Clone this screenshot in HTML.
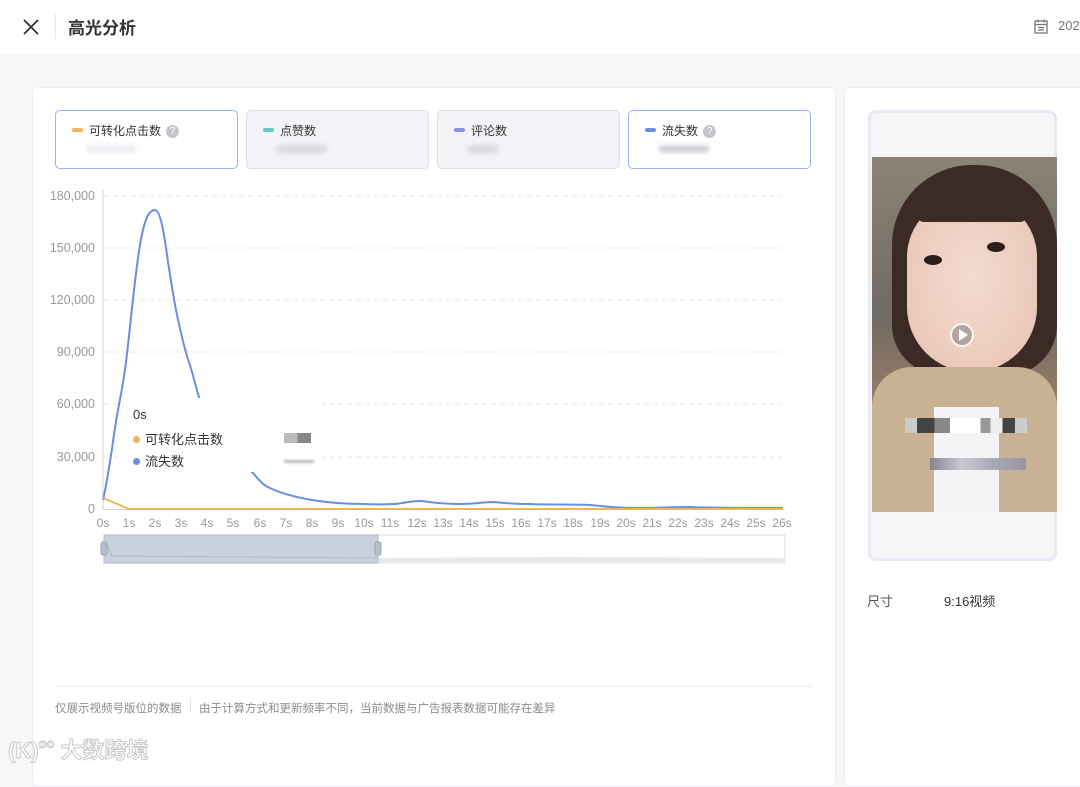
<!DOCTYPE html>
<html><head><meta charset="utf-8"><style>
*{margin:0;padding:0;box-sizing:border-box}
body{width:1080px;height:770px;overflow:hidden;background:#f6f7f9;font-family:"Liberation Sans","Noto Sans CJK SC",sans-serif;position:relative;color:#333}
.hdr{position:absolute;left:0;top:0;width:1080px;height:54px;background:#fff}
.card{position:absolute;background:#fff;border:1px solid #eceef2;border-radius:6px}
.m{position:absolute;top:110px;width:183px;height:59px;border-radius:5px;border:1px solid #dcdfe6;background:#f2f3f6}
.m.sel{background:#fff;border-color:#9fb4e6}
.m .t{position:absolute;left:33px;top:11px;font-size:12px;color:#333}
.m .d{position:absolute;left:16px;top:17px;width:11px;height:4px;border-radius:2px}
.m .q{display:inline-block;width:13px;height:13px;border-radius:50%;background:#c4c6cc;color:#fff;font-size:10px;text-align:center;line-height:13px;margin-left:5px;vertical-align:1px}
.m .v{position:absolute;left:30px;top:34px;width:50px;height:8px;background:#eceef2;border-radius:3px;filter:blur(2px)}
.yl{position:absolute;width:60px;text-align:right;font-size:12.5px;color:#999;left:35px}
.xl{position:absolute;top:516px;font-size:12px;color:#999;width:30px;text-align:center}
</style></head><body>
<div class="hdr">
<svg style="position:absolute;left:22px;top:18px" width="18" height="18" viewBox="0 0 18 18"><path d="M2 2L16 16M16 2L2 16" stroke="#333" stroke-width="1.8"/></svg>
<div style="position:absolute;left:55px;top:14px;width:1px;height:25px;background:#e5e5e5"></div>
<div style="position:absolute;left:68px;top:14px;font-size:17px;font-weight:bold;color:#333">高光分析</div>
<svg style="position:absolute;left:1034px;top:19px" width="14" height="15" viewBox="0 0 14 15"><rect x="1" y="2" width="12" height="12" fill="none" stroke="#777" stroke-width="1.3"/><path d="M4 0.5V3.5M10 0.5V3.5M1 5.5H13M4 8.5H10M4 11H10" stroke="#777" stroke-width="1.2"/></svg>
<div style="position:absolute;left:1058px;top:18px;font-size:13px;color:#777">202</div>
</div>
<div class="card" style="left:32px;top:87px;width:804px;height:700px"></div>
<div class="card" style="left:844px;top:87px;width:250px;height:700px"></div>

<div class="m sel" style="left:55px"><div class="d" style="background:#f2b35d"></div><div class="t">可转化点击数<span class="q">?</span></div><div class="v"></div></div>
<div class="m" style="left:246px"><div class="d" style="background:#5ecdc1"></div><div class="t">点赞数</div><div class="v" style="background:#d8dae0"></div></div>
<div class="m" style="left:437px"><div class="d" style="background:#8a8fe8"></div><div class="t">评论数</div><div class="v" style="width:30px;background:#d8dae0"></div></div>
<div class="m sel" style="left:628px"><div class="d" style="background:#6a8fe0"></div><div class="t">流失数<span class="q">?</span></div><div class="v" style="background:#cfd2d8"></div></div>

<svg style="position:absolute;left:0;top:0" width="840" height="600">
<g stroke="#e6e8ec" stroke-dasharray="5,4" stroke-width="1">
<line x1="104" y1="196" x2="783" y2="196"/><line x1="104" y1="248" x2="783" y2="248"/><line x1="104" y1="300" x2="783" y2="300"/><line x1="104" y1="352" x2="783" y2="352"/><line x1="104" y1="404" x2="783" y2="404"/><line x1="104" y1="457" x2="783" y2="457"/>
</g>
<line x1="103" y1="190" x2="103" y2="509" stroke="#d0d3d9"/>
<line x1="103" y1="509.5" x2="785" y2="509.5" stroke="#d0d3d9"/>
<path d="M103 500 C110 470 114 430 118 410 C122 390 126 365 128 345 C132 310 135 275 140 245 C145 215 150 210 155 210 C161 210 165 240 168 262 C171 280 173 295 176 310 C180 330 186 355 190 365 C194 378 197 392 200 400" fill="none" stroke="#6a8fe0" stroke-width="2"/>
<path d="M250 470 C258 478 262 485 270 488 C280 493 295 497 312 500 C330 503 345 504 364 504 C378 505 385 504 395 504 C405 503 410 501 420 501 C432 502 440 504 460 504 C475 504 483 502 494 502 C505 503 512 504 530 504 C550 505 570 504 590 505 C610 507 620 508 640 508 C660 508 670 507 690 507 C710 508 730 508 783 508" fill="none" stroke="#6a8fe0" stroke-width="2"/>
<path d="M103 498 L129 509 L783 509" fill="none" stroke="#f2b35d" stroke-width="2"/>
<rect x="104" y="535" width="681" height="28" fill="#fff" stroke="#dcdfe5"/>
<path d="M378 558 L560 557 L785 558 L785 563 L378 563Z" fill="#e6e8ec"/>
<rect x="104" y="535" width="274" height="28" fill="#c9d1dd" stroke="#aeb8c8"/>
<path d="M106 542 L112 556 L378 558" fill="none" stroke="#b0b9c9"/>
<rect x="101" y="542" width="6" height="13" rx="2" fill="#b6bfcc" stroke="#9aa5b8"/>
<rect x="375" y="542" width="6" height="13" rx="2" fill="#b6bfcc" stroke="#9aa5b8"/>
</svg>
<div class="yl" style="top:189px">180,000</div><div class="yl" style="top:241px">150,000</div><div class="yl" style="top:293px">120,000</div><div class="yl" style="top:345px">90,000</div><div class="yl" style="top:397px">60,000</div><div class="yl" style="top:450px">30,000</div><div class="yl" style="top:502px">0</div>
<div class="xl" style="left:88px">0s</div><div class="xl" style="left:114px">1s</div><div class="xl" style="left:140px">2s</div><div class="xl" style="left:166px">3s</div><div class="xl" style="left:192px">4s</div><div class="xl" style="left:218px">5s</div><div class="xl" style="left:245px">6s</div><div class="xl" style="left:271px">7s</div><div class="xl" style="left:297px">8s</div><div class="xl" style="left:323px">9s</div><div class="xl" style="left:349px">10s</div><div class="xl" style="left:375px">11s</div><div class="xl" style="left:402px">12s</div><div class="xl" style="left:428px">13s</div><div class="xl" style="left:454px">14s</div><div class="xl" style="left:480px">15s</div><div class="xl" style="left:506px">16s</div><div class="xl" style="left:532px">17s</div><div class="xl" style="left:558px">18s</div><div class="xl" style="left:585px">19s</div><div class="xl" style="left:611px">20s</div><div class="xl" style="left:637px">21s</div><div class="xl" style="left:663px">22s</div><div class="xl" style="left:689px">23s</div><div class="xl" style="left:715px">24s</div><div class="xl" style="left:741px">25s</div><div class="xl" style="left:767px">26s</div>

<div style="position:absolute;left:122px;top:398px;width:200px;height:74px;background:rgba(255,255,255,0.96);font-size:13px;color:#333">
<div style="position:absolute;left:11px;top:9px">0s</div>
<div style="position:absolute;left:11px;top:31px"><span style="display:inline-block;width:7px;height:7px;border-radius:50%;background:#f2b35d;margin-right:5px;vertical-align:1px"></span>可转化点击数</div>
<div style="position:absolute;left:11px;top:53px"><span style="display:inline-block;width:7px;height:7px;border-radius:50%;background:#6a8fe0;margin-right:5px;vertical-align:1px"></span>流失数</div>
<div style="position:absolute;left:162px;top:35px;width:27px;height:10px;background:linear-gradient(90deg,#bbb 0 50%,#888 50%)"></div>
<div style="position:absolute;left:162px;top:62px;width:30px;height:3px;background:#bbb;filter:blur(1px)"></div>
</div>

<div style="position:absolute;left:55px;top:686px;width:757px;height:1px;background:#eceef2"></div>
<div style="position:absolute;left:55px;top:700px;font-size:11.5px;color:#8c8c8c">仅展示视频号版位的数据</div>
<div style="position:absolute;left:190px;top:699px;width:1px;height:14px;background:#ddd"></div>
<div style="position:absolute;left:199px;top:700px;font-size:11.5px;color:#8c8c8c">由于计算方式和更新频率不同，当前数据与广告报表数据可能存在差异</div>
<div style="position:absolute;left:8px;top:733px;font-size:22px;font-weight:bold;color:#fff;-webkit-text-stroke:1px #c9c9c9">(K)<span style="font-size:13px;vertical-align:10px">oo</span> 大数跨境</div>

<div style="position:absolute;left:868px;top:110px;width:189px;height:451px;background:#f6f6f7;border:3px solid #e6e9f3;border-radius:8px"></div>
<div style="position:absolute;left:872px;top:157px;width:185px;height:355px;overflow:hidden;background:linear-gradient(180deg,#8b8376 0%,#6f6a62 45%,#9a7c66 70%,#b49a7e 100%)">
<div style="position:absolute;left:20px;top:8px;width:165px;height:210px;border-radius:80px 80px 50px 50px;background:#3b2b24"></div>
<div style="position:absolute;left:35px;top:40px;width:130px;height:175px;border-radius:60px 60px 65px 65px;background:radial-gradient(ellipse at 50% 45%,#f4dbd0,#e7c2b2)"></div>
<div style="position:absolute;left:45px;top:30px;width:110px;height:35px;border-radius:40px 40px 10px 10px;background:#3b2b24"></div>
<div style="position:absolute;left:0;top:210px;width:185px;height:150px;background:#c9b194;border-radius:40px 40px 0 0"></div>
<div style="position:absolute;left:62px;top:250px;width:65px;height:110px;background:#f4f4f6"></div>
<div style="position:absolute;left:52px;top:98px;width:18px;height:10px;border-radius:50%;background:#2a1e1a"></div>
<div style="position:absolute;left:115px;top:85px;width:18px;height:10px;border-radius:50%;background:#2a1e1a"></div>
<div style="position:absolute;left:78px;top:166px;width:24px;height:24px;border-radius:50%;border:2px solid rgba(255,255,255,0.9);background:rgba(120,120,120,0.5)"></div>
<div style="position:absolute;left:87px;top:172px;width:0;height:0;border-left:9px solid #fff;border-top:6px solid transparent;border-bottom:6px solid transparent"></div>
<div style="position:absolute;left:33px;top:261px;width:122px;height:15px;background:linear-gradient(90deg,#ccc 0 10%,#444 10% 24%,#888 24% 37%,#fff 37% 62%,#999 62% 70%,#eee 70% 80%,#444 80% 90%,#ccc 90%)"></div>
<div style="position:absolute;left:58px;top:301px;width:96px;height:12px;background:linear-gradient(90deg,#8a8490,#c8c8d2,#a8a8b8,#9a94a4)"></div>
</div>
<div style="position:absolute;left:867px;top:591px;font-size:13px;color:#555">尺寸</div>
<div style="position:absolute;left:944px;top:591px;font-size:13px;color:#333">9:16视频</div>
</body></html>
